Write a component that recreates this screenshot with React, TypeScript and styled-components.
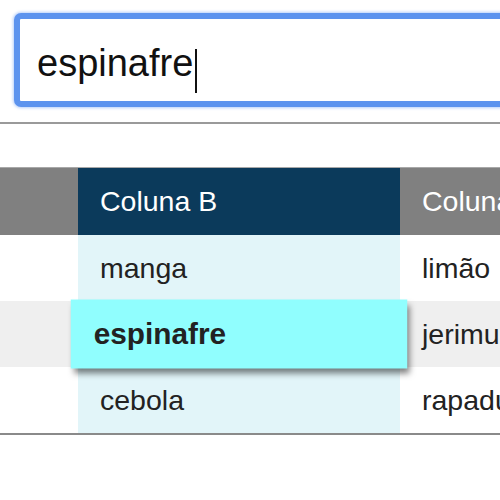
import { useEffect, useRef } from "react";
import styled, { createGlobalStyle } from "styled-components";

const GlobalStyle = createGlobalStyle`
  html, body {
    margin: 0;
    padding: 0;
    background: #ffffff;
    overflow: hidden;
  }
  body {
    font-family: "Liberation Sans", Arial, Helvetica, sans-serif;
    color: #222222;
  }
`;

const Page = styled.div`
  width: 500px;
  height: 500px;
  overflow: hidden;
`;

const SearchBar = styled.div`
  padding: 13px 0 15px 14px;
  border-bottom: 2px solid #9a9a9a;
`;

const Field = styled.label`
  position: relative;
  display: block;
`;

const SearchInput = styled.input`
  box-sizing: border-box;
  display: block;
  width: 620px;
  height: 94px;
  padding: 6px 0 0 17px;
  border: 6px solid #5c93ee;
  border-radius: 7px;
  box-shadow: 0 0 3px 1px rgba(120, 165, 245, 0.55);
  outline: none;
  background: #ffffff;
  font-family: inherit;
  font-size: 38px;
  color: #111111;
  caret-color: transparent;
`;

/* drawn caret so it shows whether or not the window has focus */
const Caret = styled.span`
  position: absolute;
  top: 36px;
  left: 181px;
  width: 1.5px;
  height: 44px;
  background: #111111;
  pointer-events: none;
`;

const TableWrap = styled.div`
  margin-top: 43px;
  margin-left: -244px;
`;

const Table = styled.table`
  border-collapse: separate;
  border-spacing: 0;
  table-layout: fixed;
  width: 966px;
  font-size: 28.5px;
  border-top: 1px solid #a8a8a8;
  border-bottom: 2px solid #8a8a8a;
`;

const HeadCell = styled.th<{ $active?: boolean }>`
  height: 67px;
  padding: 0 22px;
  text-align: left;
  font-weight: normal;
  color: #ffffff;
  background: ${(p) => (p.$active ? "#0b3a5b" : "#808080")};
  white-space: nowrap;
`;

const Row = styled.tr<{ $striped?: boolean }>`
  background: ${(p) => (p.$striped ? "#efefef" : "#ffffff")};
`;

const Cell = styled.td<{ $column?: boolean; $match?: boolean }>`
  height: 66px;
  padding: 0 22px;
  white-space: nowrap;
  color: #222222;
  background: ${(p) => (p.$match ? "#90fefe" : p.$column ? "#e2f5f9" : "transparent")};
  font-weight: ${(p) => (p.$match ? "bold" : "normal")};
  ${(p) =>
    p.$match &&
    `
    position: relative;
    z-index: 1;
    transform: scale(1.045);
    box-shadow: 3px 5px 6px rgba(0, 0, 0, 0.5);
  `}
`;

const rows = [
  { a: "banana", b: "manga", c: "limão" },
  { a: "alface", b: "espinafre", c: "jerimum" },
  { a: "tomate", b: "cebola", c: "rapadura" },
];

const query = "espinafre";

export default function App() {
  const inputRef = useRef<HTMLInputElement>(null);

  useEffect(() => {
    const el = inputRef.current;
    if (el) {
      el.focus({ preventScroll: true });
      el.setSelectionRange(query.length, query.length);
    }
  }, []);

  return (
    <Page>
      <GlobalStyle />
      <SearchBar>
        <Field>
          <SearchInput ref={inputRef} type="text" defaultValue={query} />
          <Caret />
        </Field>
      </SearchBar>
      <TableWrap>
        <Table>
          <colgroup>
            <col style={{ width: 322 }} />
            <col style={{ width: 322 }} />
            <col style={{ width: 322 }} />
          </colgroup>
          <thead>
            <tr>
              <HeadCell>Coluna A</HeadCell>
              <HeadCell $active>Coluna B</HeadCell>
              <HeadCell>Coluna C</HeadCell>
            </tr>
          </thead>
          <tbody>
            {rows.map((r, i) => (
              <Row key={r.b} $striped={i % 2 === 1}>
                <Cell>{r.a}</Cell>
                <Cell $column $match={r.b === query}>
                  {r.b}
                </Cell>
                <Cell>{r.c}</Cell>
              </Row>
            ))}
          </tbody>
        </Table>
      </TableWrap>
    </Page>
  );
}
